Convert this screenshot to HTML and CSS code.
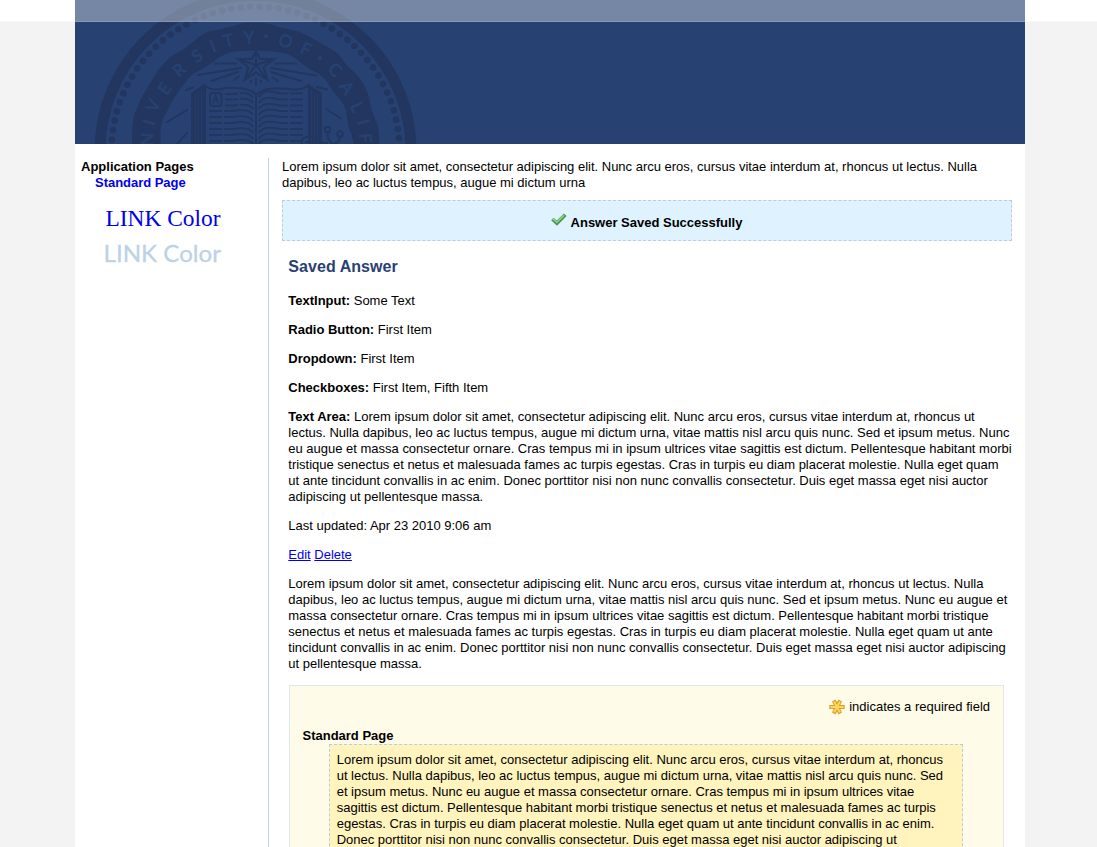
FILE: index.html
```html
<!DOCTYPE html>
<html lang="en">
<head>
<meta charset="utf-8">
<title>Standard Page</title>
<link rel="stylesheet" href="styles.css">
</head>
<body>
<div class="page">
  <header class="banner">
    <svg class="seal" width="360" height="144" viewBox="75 0 360 144">
      <circle class="ring" cx="255.500" cy="150.700" r="155.500"/>
      <circle class="beads" cx="255.500" cy="150.700" r="144" transform="rotate(-5.060 255.500 150.700)"/>
      <path class="dark" d="M132 146L132.300 127Q133 114 143 95Q149 85 157 72Q165 60 177 53Q186 48 193 42Q204 32 212 31Q222 29 233 26Q245 22 254 22.700Q263 22 273 25Q283 29 293 30Q305 33 320 43Q335 50 341 57Q347 67 353 71Q361 78 366 89Q369 96 371 107Q373 115 377 123Q380 133 379 146L354 146Q353 137 349 128Q347 119 346 111Q344 103 337 96Q332 91 328 83Q323 75 311 70Q305 66 300 62Q293 55 283 53Q270 50 255 50.500Q240 50 231 52Q219 56 213 62Q206 67 198 71Q191 74 185 83Q179 90 174 98Q168 109 163 119Q159 130 161 146Z"/>
      <g class="letters">
        <text transform="translate(147 139.500) rotate(-85)" y="6">N</text>
        <text transform="translate(149 122.500) rotate(-75)" y="6">I</text>
        <text transform="translate(153 105.500) rotate(-66)" y="6">V</text>
        <text transform="translate(164.500 88.500) rotate(-56)" y="6">E</text>
        <text transform="translate(179 70) rotate(-43)" y="6">R</text>
        <text transform="translate(197 56) rotate(-32)" y="6">S</text>
        <text transform="translate(213 46) rotate(-22)" y="6">I</text>
        <text transform="translate(228.500 40.500) rotate(-14)" y="6">T</text>
        <text transform="translate(249 37.500) rotate(-3)" y="6">Y</text>
        <text transform="translate(285.500 41) rotate(15)" y="6">O</text>
        <text transform="translate(306 49) rotate(26)" y="6">F</text>
        <text transform="translate(335 69.500) rotate(44)" y="6">C</text>
        <text transform="translate(347 87.500) rotate(55)" y="6">A</text>
        <text transform="translate(357 107) rotate(66)" y="6">L</text>
        <text transform="translate(363.500 122) rotate(76)" y="6">I</text>
        <text transform="translate(365.500 138) rotate(85)" y="6">F</text>
        <circle cx="266" cy="36.300" r="1.800"/><circle cx="319.800" cy="58" r="1.800"/>
      </g>
      <path class="star" d="M256 51L260.300 59H274L263.500 67L267.500 80L256 72.500L244.500 80L248.500 67L238 59H251.700ZM256 50V65M274 59L256 65L267.500 80M238 59L256 65L244.500 80"/>
      <path class="line" d="M215 63.500H236M198 75L241 68M211 81L238 72M234 80L239 76.500M186 90L193 87.500M167 122L187 110M177 144L187 133M276 63.500H296M271 68L316 75.500M271 72L301 81M273 78L278 81M317 87L327 89.500M326 109L341 118.500M251 81V82.500M256 79V85M261 81V82.500"/>
      <path class="dark" d="M191 93L204 84L206 88V144H191ZM308 88V84L322 93V144H308Z"/>
      <path class="groove" d="M195.500 94V144M198.500 92V144M201.500 91V144M311.500 91V144M314.500 93V144M317.500 94V144"/>
      <path class="line" d="M204 85Q212 92 225 88Q250 86 256 95Q264 86 288 89Q302 91 309 85M256 95V144"/>
      <rect class="line" x="210" y="93" width="11.500" height="13" rx="2.500"/>
      <path class="line thin" d="M213 103L215.500 95.500L218 103M214 100.500H217"/>
      <path class="page-lines" d="M225 94H234Q250 91 253 98M225 99.500H234Q250 97 253 103M225 105.500H234Q250 103 253 109M209 111H232Q249 108 253 115M209 117H232Q249 114 253 121M209 123H232Q249 120 253 127M209 129H232Q249 126 253 133M209 135H232Q249 132 253 139M209 141H232Q249 138 253 144"/>
      <path class="page-lines" d="M303 93.500H280Q263 88 259 97M303 99.500H280Q263 95 259 103M303 105.500H280Q263 101 259 109M303 111H280Q263 107 259 115M303 117H280Q263 113 259 121M303 123H280Q263 119 259 127M303 129H280Q263 125 259 133M303 135H280Q263 131 259 139M303 141H280Q263 137 259 144"/>
      <path class="line" d="M302 144Q300 138 307 137H317M306 142H314"/>
      <g class="line"><circle cx="327.500" cy="129.500" r="2.700"/><circle cx="340" cy="134" r="2.700"/><path d="M327 132L328 138L332 144M340 137L338 142L334 144M321 143H327"/></g>
    </svg>
  </header>
  <div class="columns">
    <nav class="side">
      <b>Application Pages</b>
      <a class="current" href="#">Standard Page</a>
      <svg class="samples" width="170" height="70" viewBox="0 0 170 70">
        <text class="sample-serif" x="24.500" y="24" textLength="115" lengthAdjust="spacingAndGlyphs">LINK Color</text>
        <text class="sample-sans" x="22.500" y="59.500" textLength="117.500" lengthAdjust="spacingAndGlyphs">LINK Color</text>
      </svg>
    </nav>
    <main class="content">
      <p class="intro">Lorem ipsum dolor sit amet, consectetur adipiscing elit. Nunc arcu eros, cursus vitae interdum at, rhoncus ut lectus. Nulla<br>dapibus, leo ac luctus tempus, augue mi dictum urna</p>
      <div class="notice">
        <svg class="check" width="16" height="16" viewBox="0 0 16 16"><path d="M.2 8.200L2.600 5.700L5.800 8.600L12.800 1.500L15.600 4L6 13.800Z"/><path class="shine" d="M1.800 8L2.700 7.200L5.900 10.300L13 3.200"/></svg>
        <b>Answer Saved Successfully</b>
      </div>
      <section class="answer">
        <h2>Saved Answer</h2>
        <p><b>TextInput:</b> Some Text</p>
        <p><b>Radio Button:</b> First Item</p>
        <p><b>Dropdown:</b> First Item</p>
        <p><b>Checkboxes:</b> First Item, Fifth Item</p>
        <p><b>Text Area:</b> Lorem ipsum dolor sit amet, consectetur adipiscing elit. Nunc arcu eros, cursus vitae interdum at, rhoncus ut<br>lectus. Nulla dapibus, leo ac luctus tempus, augue mi dictum urna, vitae mattis nisl arcu quis nunc. Sed et ipsum metus. Nunc<br>eu augue et massa consectetur ornare. Cras tempus mi in ipsum ultrices vitae sagittis est dictum. Pellentesque habitant morbi<br>tristique senectus et netus et malesuada fames ac turpis egestas. Cras in turpis eu diam placerat molestie. Nulla eget quam<br>ut ante tincidunt convallis in ac enim. Donec porttitor nisi non nunc convallis consectetur. Duis eget massa eget nisi auctor<br>adipiscing ut pellentesque massa.</p>
        <p>Last updated: Apr 23 2010 9:06 am</p>
        <p><a href="#">Edit</a> <a href="#">Delete</a></p>
        <p>Lorem ipsum dolor sit amet, consectetur adipiscing elit. Nunc arcu eros, cursus vitae interdum at, rhoncus ut lectus. Nulla<br>dapibus, leo ac luctus tempus, augue mi dictum urna, vitae mattis nisl arcu quis nunc. Sed et ipsum metus. Nunc eu augue et<br>massa consectetur ornare. Cras tempus mi in ipsum ultrices vitae sagittis est dictum. Pellentesque habitant morbi tristique<br>senectus et netus et malesuada fames ac turpis egestas. Cras in turpis eu diam placerat molestie. Nulla eget quam ut ante<br>tincidunt convallis in ac enim. Donec porttitor nisi non nunc convallis consectetur. Duis eget massa eget nisi auctor adipiscing<br>ut pellentesque massa.</p>
      </section>
      <section class="form">
        <p class="required">
          <svg class="asterisk" width="16" height="16" viewBox="0 0 16 16"><path class="edge" d="M.3 8H15.700M4.800 1.500L11.200 14.500M11.200 1.500L4.800 14.500"/><path class="core" d="M1.500 8H14.500M5.200 2.600L10.800 13.400M10.800 2.600L5.200 13.400"/></svg>
          indicates a required field</p>
        <b>Standard Page</b>
        <div class="hint">Lorem ipsum dolor sit amet, consectetur adipiscing elit. Nunc arcu eros, cursus vitae interdum at, rhoncus<br>ut lectus. Nulla dapibus, leo ac luctus tempus, augue mi dictum urna, vitae mattis nisl arcu quis nunc. Sed<br>et ipsum metus. Nunc eu augue et massa consectetur ornare. Cras tempus mi in ipsum ultrices vitae<br>sagittis est dictum. Pellentesque habitant morbi tristique senectus et netus et malesuada fames ac turpis<br>egestas. Cras in turpis eu diam placerat molestie. Nulla eget quam ut ante tincidunt convallis in ac enim.<br>Donec porttitor nisi non nunc convallis consectetur. Duis eget massa eget nisi auctor adipiscing ut</div>
      </section>
    </main>
  </div>
</div>
<div class="topbar"></div>
</body>
</html>
```
FILE: styles.css
```css
html, body { height: 100%; margin: 0; overflow: hidden; }
html { background: linear-gradient(#fff 21px, #f3f3f3 21px); }
body { color: #000; font: 13px/16px "Liberation Sans", Arial, sans-serif; }
p, h2 { margin: 0; }
a { color: #00e; }
.topbar { position: absolute; top: 0; left: 0; right: 0; height: 21px; background: rgba(255,255,255,.37); border-bottom: 1px solid rgba(255,255,255,.15); }
.page { width: 950px; height: 847px; margin-left: 75px; background: #fff; overflow: hidden; }
.banner { height: 144px; background: #274272; }
.seal { display: block; }
.ring, .beads, .line, .star, .page-lines, .groove { fill: none; stroke: #22365f; }
.ring { stroke-width: 11; }
.beads { stroke-width: 6.600; stroke-linecap: round; stroke-dasharray: 0 9.524; }
.dark { fill: #22365f; }
.letters { fill: #274272; font: 17px Lato, sans-serif; text-anchor: middle; stroke: #274272; stroke-width: .7; }
.line { stroke-width: 2; stroke-linecap: round; }
.thin { stroke-width: 1.500; }
.star { stroke-width: 2; }
.page-lines { stroke-width: 1.900; stroke-dasharray: 13 2 60; }
.groove { stroke: #274272; stroke-width: .6; }
.columns { display: flex; padding-top: 14px; }
.side { width: 193px; height: 700px; box-sizing: border-box; padding: 1px 0 0 6px; }
.side b, .side a { display: block; }
.side .current { margin-left: 14px; font-weight: bold; text-decoration: none; letter-spacing: -.03px; }
.samples { display: block; margin-top: 11px; }
.sample-serif { font: 24px "Liberation Serif", serif; fill: #00e; }
.sample-sans { font: 22.500px Lato, sans-serif; fill: #bdd2e6; stroke: #bdd2e6; stroke-width: .3; }
.content { width: 730px; border-left: 1px solid #bcd2e8; padding: 1px 0 0 13px; white-space: nowrap; letter-spacing: -.006px; }
.notice { height: 39px; margin-top: 9px; border: 1px dashed #b8cee4; background: #dff2ff; display: flex; justify-content: center; align-items: center; gap: 4px; }
.notice b { padding-top: 4px; }
.check { margin: -2px 0 0 -1px; fill: #43984a; }
.check .shine { fill: none; stroke: #8bd087; stroke-width: 1.700; }
.answer { padding: 17px 0 0 6.300px; }
.answer h2 { font-size: 16px; line-height: 18px; color: #2a3f73; margin-bottom: 17px; letter-spacing: .06px; }
.answer p { margin-bottom: 13px; }
.form { margin: 0 8px 0 7px; height: 300px; padding: 13px 13px 0 12.500px; border: 1px solid #e0e8ee; background: #fefce8; }
.required { display: flex; justify-content: flex-end; align-items: center; gap: 4px; margin-bottom: 13px; }
.asterisk .edge { stroke: #dda02f; stroke-width: 4; }
.asterisk .core { stroke: #ffd75c; stroke-width: 2; }
.hint { margin: 0 27px 0 26.500px; padding: 7px 6.700px; height: 180px; border: 1px dashed #b8cee0; background: #fff3be; }
```
